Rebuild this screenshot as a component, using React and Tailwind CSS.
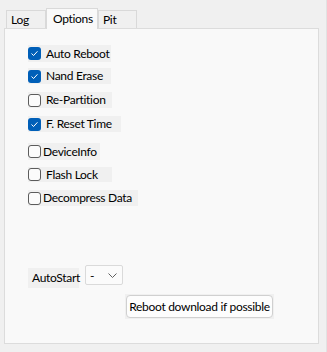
import React from 'react'

const rows = [
  { label: 'Auto Reboot', checked: true, w: 'w-[83px]', gap: 'gap-[5px]', mt: 'mt-0', h: 'h-[17px]' },
  { label: 'Nand Erase', checked: true, w: 'w-[83px]', gap: 'gap-[5px]', mt: 'mt-[6px]', h: 'h-[16px]' },
  { label: 'Re-Partition', checked: false, w: 'w-[84px]', gap: 'gap-[5px]', mt: 'mt-[8px]', h: 'h-[16px]' },
  { label: 'F. Reset Time', checked: true, w: 'w-[93px]', gap: 'gap-[5px]', mt: 'mt-[8px]', h: 'h-[16px]' },
  { label: 'DeviceInfo', checked: false, w: 'w-[72px]', gap: 'gap-[2px]', mt: 'mt-[11px]', h: 'h-[17px]' },
  { label: 'Flash Lock', checked: false, w: 'w-[84px]', gap: 'gap-[5px]', mt: 'mt-[7px]', h: 'h-[15px]' },
  { label: 'Decompress Data', checked: false, w: 'w-[110px]', gap: 'gap-[2px]', mt: 'mt-[8px]', h: 'h-[16px]' },
]

// Windows style checkbox
const Check = ({ checked }) =>
  checked ? (
    <span className="flex w-[13px] h-[13px] shrink-0 items-center justify-center rounded-[3px] bg-[#005fb8]">
      <svg width="9" height="9" viewBox="0 0 9 9" fill="none">
        <path d="M1.8 4.8 L3.6 6.5 L7.2 2.6" stroke="#ffffff" strokeWidth="1" strokeLinecap="round" strokeLinejoin="round" />
      </svg>
    </span>
  ) : (
    <span className="block w-[13px] h-[13px] shrink-0 rounded-[3px] border border-[#5c5c5c] bg-[#fbfbfb]" />
  )

const Tab = ({ children, active, w }) => (
  <div
    className={
      active
        ? `${w} h-[21px] relative z-10 -mb-px border border-b-0 border-[#d9d9d9] bg-[#f9f9f9] pl-[6px] pt-[2px]`
        : `${w} h-[18px] border border-b-0 border-[#d9d9d9] bg-[#f0f0f0] pl-[4px] pt-[1px]`
    }
  >
    {children}
  </div>
)

export default function App() {
  return (
    <div className="w-[327px] h-[352px] bg-[#f0f0f0] font-['Lato','Liberation_Sans',sans-serif] text-[12px] leading-[16px] tracking-[-0.3px] text-black border-r border-[#e2e2e2]">
      {/* Tabs */}
      <div className="flex items-end pt-[8px] pl-[6px]">
        <Tab w="w-[40px]">Log</Tab>
        <Tab w="w-[52px]" active>Options</Tab>
        <Tab w="w-[39px]">Pit</Tab>
      </div>

      {/* Panel */}
      <div className="ml-[4px] w-[315px] h-[316px] border border-[#dcdcdc] bg-[#f9f9f9] pl-[23px] pt-[16px]">
        <div className="flex flex-col items-start">
          {rows.map((r) => (
            <div key={r.label} className={`flex items-center ${r.gap} ${r.w} ${r.h} ${r.mt} bg-[#f0f0f0]`}>
              <Check checked={r.checked} />
              <span className="whitespace-nowrap">{r.label}</span>
            </div>
          ))}
        </div>

        {/* AutoStart */}
        <div className="mt-[59px] flex items-start gap-[6px]">
          <div className="mt-[3px] flex h-[20px] w-[51px] items-center bg-[#f0f0f0] pl-[4px]">AutoStart</div>
          <div className="flex h-[20px] w-[38px] items-center justify-between rounded-[2px] border border-[#dadada] bg-[#fbfbfb] pl-[4px] pr-[5px]">
            <span className="mt-[2px]">-</span>
            <svg width="9" height="5" viewBox="0 0 9 5" fill="none">
              <path d="M0.5 0.5 L4.5 4.5 L8.5 0.5" stroke="#606060" strokeWidth="1" />
            </svg>
          </div>
        </div>

        <div className="mt-[6px] ml-[97px] w-[149px] h-[25px] bg-[#f0f0f0] p-px">
          <button className="w-full h-full whitespace-nowrap rounded-[4px] border border-[#d0d0d0] bg-[#fdfdfd] text-[12px] tracking-[-0.3px]">
            Reboot download if possible
          </button>
        </div>
      </div>
    </div>
  )
}
